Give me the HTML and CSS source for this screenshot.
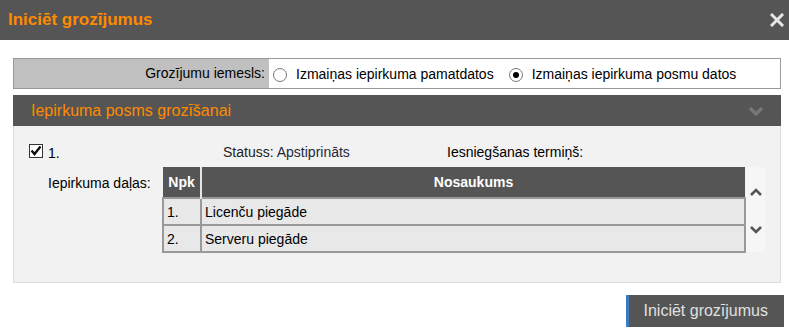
FILE: index.html
```html
<!DOCTYPE html>
<html lang="lv">
<head>
    <meta charset="UTF-8">
    <meta name="viewport" content="width=device-width, initial-scale=1.0">
    <title>Iniciēt grozījumus</title>
    <link rel="stylesheet" href="styles.css">
</head>
<body>
    <div class="dialog">
        <header class="dialog-header">
            <h1 class="dialog-title">Iniciēt grozījumus</h1>
            <span class="dialog-close">
                <svg width="14" height="14" viewBox="0 0 14 14">
                    <path d="M2 2 L12 12 M12 2 L2 12" stroke="#e6e6e6" stroke-width="3" stroke-linecap="square"/>
                </svg>
            </span>
        </header>

        <main class="dialog-body">
            <div class="reason-row">
                <div class="reason-label">Grozījumu iemesls:</div>
                <div class="reason-options">
                    <label class="radio-option">
                        <input type="radio" name="reason" class="radio">
                        Izmaiņas iepirkuma pamatdatos
                    </label>
                    <label class="radio-option">
                        <input type="radio" name="reason" class="radio" checked>
                        Izmaiņas iepirkuma posmu datos
                    </label>
                </div>
            </div>

            <section class="stage-section">
                <div class="section-header">
                    <span class="section-title">Iepirkuma posms grozīšanai</span>
                    <svg class="section-chevron" width="16" height="10" viewBox="0 0 16 10">
                        <path d="M2 2 L8 8 L14 2" stroke="#777" stroke-width="3.5" fill="none"/>
                    </svg>
                </div>
                <div class="section-content">
                    <div class="stage-row">
                        <div class="stage-num">
                            <span class="checkbox">
                                <svg width="14" height="14" viewBox="0 0 14 14">
                                    <rect x="0.5" y="0.5" width="13" height="13" fill="#fff" stroke="#333"/>
                                    <path d="M2.5 6.5 L5.5 10 L11.5 2.5" stroke="#111" stroke-width="2.4" fill="none"/>
                                </svg>
                            </span>
                            <span class="num-text">1.</span>
                        </div>
                        <div class="stage-status"><span class="field-label">Statuss:</span> <span class="field-value">Apstiprināts</span></div>
                        <div class="stage-term">Iesniegšanas termiņš:</div>
                    </div>

                    <div class="parts-row">
                        <div class="parts-label">Iepirkuma daļas:</div>
                        <table class="parts-table">
                            <thead>
                                <tr>
                                    <th class="col-npk">Npk</th>
                                    <th>Nosaukums</th>
                                </tr>
                            </thead>
                            <tbody>
                                <tr>
                                    <td>1.</td>
                                    <td>Licenču piegāde</td>
                                </tr>
                                <tr>
                                    <td>2.</td>
                                    <td>Serveru piegāde</td>
                                </tr>
                            </tbody>
                        </table>
                        <div class="parts-scroll">
                            <svg width="14" height="10" viewBox="0 0 14 10">
                                <path d="M2 8 L7 3 L12 8" stroke="#555" stroke-width="2.6" fill="none"/>
                            </svg>
                            <svg width="14" height="10" viewBox="0 0 14 10">
                                <path d="M2 2 L7 7 L12 2" stroke="#555" stroke-width="2.6" fill="none"/>
                            </svg>
                        </div>
                    </div>
                </div>
            </section>
        </main>

        <footer class="dialog-footer">
            <button class="btn-primary">Iniciēt grozījumus</button>
        </footer>
    </div>
</body>
</html>
```

FILE: styles.css
```css
* {
    box-sizing: border-box;
}

body {
    margin: 0;
    background-color: #fff;
    font-family: "Liberation Sans", Arial, sans-serif;
    font-size: 14px;
    color: #000;
}

.dialog-header {
    height: 40px;
    background-color: #555;
    display: flex;
    align-items: center;
    justify-content: space-between;
    padding: 0 5px 0 8px;
}

.dialog-title {
    margin: 0;
    font-size: 17px;
    font-weight: bold;
    color: #ff8a00;
}

.dialog-close {
    display: flex;
    margin-top: -1px;
}

.dialog-body {
    padding: 18px 8px 0 13px;
}

.reason-row {
    display: flex;
    height: 31px;
    border: 1px solid #999;
}

.reason-label {
    width: 255px;
    background-color: #c0c0c0;
    text-align: right;
    padding-right: 4px;
    line-height: 29px;
}

.reason-options {
    flex: 1;
    display: flex;
    align-items: center;
    padding-left: 4px;
}

.radio-option {
    display: flex;
    align-items: center;
    margin-right: 15px;
}

.radio {
    appearance: none;
    -webkit-appearance: none;
    width: 14px;
    height: 14px;
    margin: 2px 9px 0 0;
    border: 1px solid #777;
    border-radius: 50%;
    background-color: #fff;
    position: relative;
}

.radio:checked::after {
    content: "";
    position: absolute;
    left: 3px;
    top: 3px;
    width: 6px;
    height: 6px;
    border-radius: 50%;
    background-color: #000;
}

.stage-section {
    margin-top: 6px;
}

.section-header {
    height: 31px;
    background-color: #555;
    display: flex;
    align-items: center;
    justify-content: space-between;
    padding: 0 17px 0 18px;
}

.section-title {
    font-size: 16px;
    color: #ff8a00;
}

.section-content {
    height: 157px;
    background-color: #f2f2f2;
    border: 1px solid #ddd;
    border-top: none;
    padding: 18px 0 0 15px;
}

.stage-row {
    display: grid;
    grid-template-columns: 194px 224px 1fr;
    height: 23px;
}

.stage-num {
    display: flex;
    align-items: flex-start;
}

.checkbox {
    display: flex;
    margin-right: 5px;
}

.num-text {
    padding-top: 1px;
}

.field-label {
    color: #222;
}

.field-value {
    color: #1e2a3a;
}

.parts-row {
    display: flex;
    align-items: flex-start;
}

.parts-label {
    width: 133px;
    padding: 8px 0 0 19px;
}

.parts-table {
    width: 584px;
    border-collapse: collapse;
}

.parts-table th {
    background-color: #555;
    color: #fff;
    font-weight: bold;
    height: 31px;
    text-align: center;
}

.parts-table th.col-npk {
    width: 38px;
    border-right: 2px solid #e6e6e6;
}

.parts-table td {
    background-color: #e8e8e8;
    border: 2px solid #999;
    height: 27px;
    padding: 0 3px;
}

.parts-scroll {
    width: 19px;
    height: 85px;
    background-color: #f6f6f6;
    display: flex;
    flex-direction: column;
    align-items: center;
    padding-top: 20px;
    gap: 28px;
}

.dialog-footer {
    display: flex;
    justify-content: flex-end;
    padding: 12px 5px 0 0;
}

.btn-primary {
    height: 32px;
    padding: 0 16px 0 15px;
    background-color: #555;
    color: #e0e0e0;
    border: none;
    border-left: 3px solid #3b7bc4;
    font-family: "Liberation Sans", Arial, sans-serif;
    font-size: 16px;
    cursor: pointer;
}
```
